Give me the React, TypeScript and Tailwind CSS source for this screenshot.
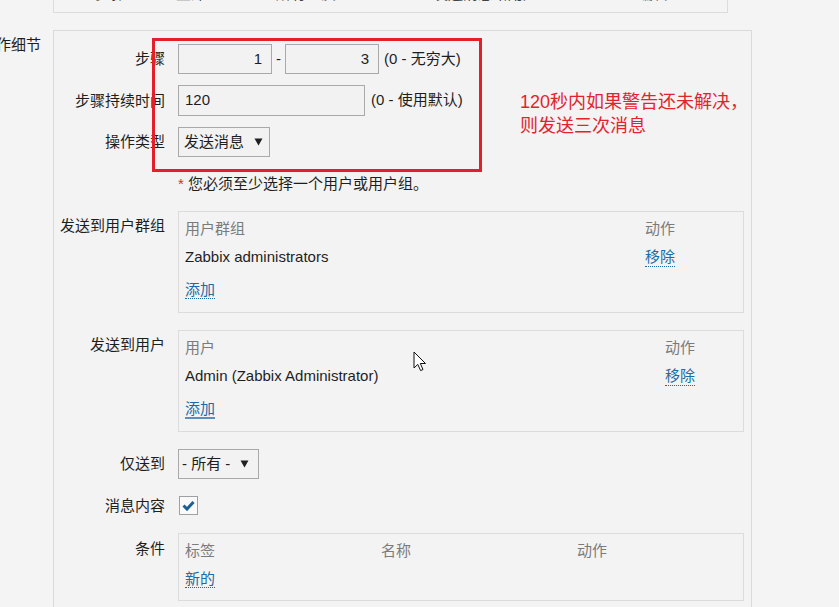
import React from 'react';

const FONT = "font-['Liberation_Sans','Noto_Sans_CJK_SC',sans-serif]";

const Caret: React.FC = () => (
    <svg width="9" height="8" viewBox="0 0 9 8" aria-hidden="true">
        <path d="M0.5 0.5 H8.5 L4.5 7.5 Z" fill="#1f1f1f" />
    </svg>
);

const Row: React.FC<{ label: string; top?: boolean; labelPad?: string; className?: string; children: React.ReactNode }> = ({ label, top, labelPad = '', className = '', children }) => (
    <div className={`flex ${top ? 'items-start' : 'items-center'} ${className}`}>
        <div className={`w-[111px] shrink-0 text-right leading-[18px] whitespace-nowrap ${labelPad}`}>{label}</div>
        <div className="ml-[13px]">{children}</div>
    </div>
);

const Link: React.FC<{ children: React.ReactNode; solid?: boolean }> = ({ children, solid }) => (
    <span className={`text-[#1d6aa6] leading-[18px] ${solid ? 'border-b-2 border-[#5b8fc0]' : 'border-b border-dotted border-[#1d6aa6]'}`}>
        {children}
    </span>
);

const ListBox: React.FC<{ head: string; item: string; col: string; solid?: boolean }> = ({ head, item, col, solid }) => (
    <div className="w-[566px] border border-[#dcdcdc] pl-[6px] pt-[8px] pb-[13px]">
        <div className="flex leading-[18px] text-[#7b7b7b]">
            <div className={col}>{head}</div>
            <div>动作</div>
        </div>
        <div className="flex leading-[18px] mt-[10px]">
            <div className={col}>{item}</div>
            <Link>移除</Link>
        </div>
        <div className="mt-[14px] leading-[18px]">
            <Link solid={solid}>添加</Link>
        </div>
    </div>
);

export default function App() {
    return (
        <div className={`relative w-[839px] min-h-[607px] overflow-hidden bg-[#f4f4f4] text-[15px] text-[#1e1e1e] ${FONT}`}>
            {/* bottom edge of the table above */}
            <div className="ml-[53px] w-[675px] h-[13px] overflow-hidden border-x border-b border-[#dcdcdc]">
                <div className="flex -mt-[15px] pl-[7px] leading-[18px] text-[#444] whitespace-nowrap">
                    <div className="w-[115px]">1 - 3 步骤</div>
                    <div className="w-[100px]">立即</div>
                    <div className="w-[157px]">所有介质</div>
                    <div className="w-[205px]">发送消息给用户</div>
                    <div>编辑</div>
                </div>
            </div>

            <div className="mt-[17px] flex">
                <div className="w-[53px] shrink-0 flex justify-end pr-[12px] pt-[6px] whitespace-nowrap leading-[18px]">操作细节</div>
                <div className="w-[699px] border border-[#dadada] bg-[#f3f3f3] pt-[13px] pb-[20px]">
                    <Row label="步骤">
                        <div className="flex items-center">
                            <div className="w-[94px] h-[30px] border border-[#a9a9a9] bg-[#f2f2f2] flex items-center justify-end pr-[9px]">1</div>
                            <span className="mx-[4px]">-</span>
                            <div className="w-[94px] h-[30px] border border-[#a9a9a9] bg-[#f2f2f2] flex items-center justify-end pr-[9px]">3</div>
                            <span className="ml-[5px]">(0 - 无穷大)</span>
                        </div>
                    </Row>
                    <Row label="步骤持续时间" className="mt-[11px]">
                        <div className="flex items-center">
                            <div className="w-[187px] h-[31px] border border-[#a9a9a9] bg-[#f2f2f2] flex items-center pl-[6px]">120</div>
                            <span className="ml-[6px]">(0 - 使用默认)</span>
                        </div>
                    </Row>
                    <Row label="操作类型" className="mt-[11px]">
                        <div className="w-[92px] h-[30px] border border-[#a9a9a9] bg-[#f2f2f2] flex items-center justify-between pl-[5px] pr-[6px]">
                            <span>发送消息</span>
                            <Caret />
                        </div>
                    </Row>
                    <div className="mt-[18px] ml-[124px] leading-[18px]">
                        <span className="text-[#d32f2f]">*</span> 您必须至少选择一个用户或用户组。
                    </div>
                    <Row label="发送到用户群组" top labelPad="pt-[6px]" className="mt-[18px]">
                        <ListBox head="用户群组" item="Zabbix administrators" col="w-[460px]" />
                    </Row>
                    <Row label="发送到用户" top labelPad="pt-[6px]" className="mt-[17px]">
                        <ListBox head="用户" item="Admin (Zabbix Administrator)" col="w-[480px]" solid />
                    </Row>
                    <Row label="仅送到" className="mt-[17px]">
                        <div className="w-[81px] h-[30px] border border-[#a9a9a9] bg-[#f2f2f2] flex items-center justify-between pl-[3px] pr-[9px]">
                            <span>- 所有 -</span>
                            <Caret />
                        </div>
                    </Row>
                    <Row label="消息内容" className="mt-[17px]">
                        <div className="ml-[1px] w-[19px] h-[19px] border border-[#a0a0a0] bg-[#fafafa] flex items-center justify-center">
                            <svg width="13" height="11" viewBox="0 0 13 11" aria-hidden="true">
                                <path d="M1.5 5.5 L5 9 L11.5 2" fill="none" stroke="#1c5f94" strokeWidth="3" />
                            </svg>
                        </div>
                    </Row>
                    <Row label="条件" top labelPad="pt-[7px]" className="mt-[18px]">
                        <div className="w-[566px] border border-[#dcdcdc] pl-[6px] pt-[8px] pb-[12px]">
                            <div className="flex leading-[18px] text-[#7b7b7b]">
                                <div className="w-[196px]">标签</div>
                                <div className="w-[196px]">名称</div>
                                <div>动作</div>
                            </div>
                            <div className="mt-[10px] leading-[18px]">
                                <Link>新的</Link>
                            </div>
                        </div>
                    </Row>
                </div>
            </div>

            {/* red annotation */}
            <div className="absolute left-[152px] top-[38px] w-[330px] h-[134px] border-[3px] border-[#e41f2c]" />
            <div className="absolute left-[520px] top-[90px] text-[18px] leading-[24px] text-[#e2232f]">
                120秒内如果警告还未解决，<br />则发送三次消息
            </div>

            {/* mouse cursor */}
            <svg className="absolute left-[413px] top-[351px]" width="14" height="22" viewBox="0 0 14 22" aria-hidden="true">
                <path d="M1 1 V17 L4.8 13.4 L7.6 19.6 L10 18.5 L7.3 12.5 H12.5 Z" fill="#fff" stroke="#111" strokeWidth="1" strokeLinejoin="round" />
            </svg>
        </div>
    );
}
